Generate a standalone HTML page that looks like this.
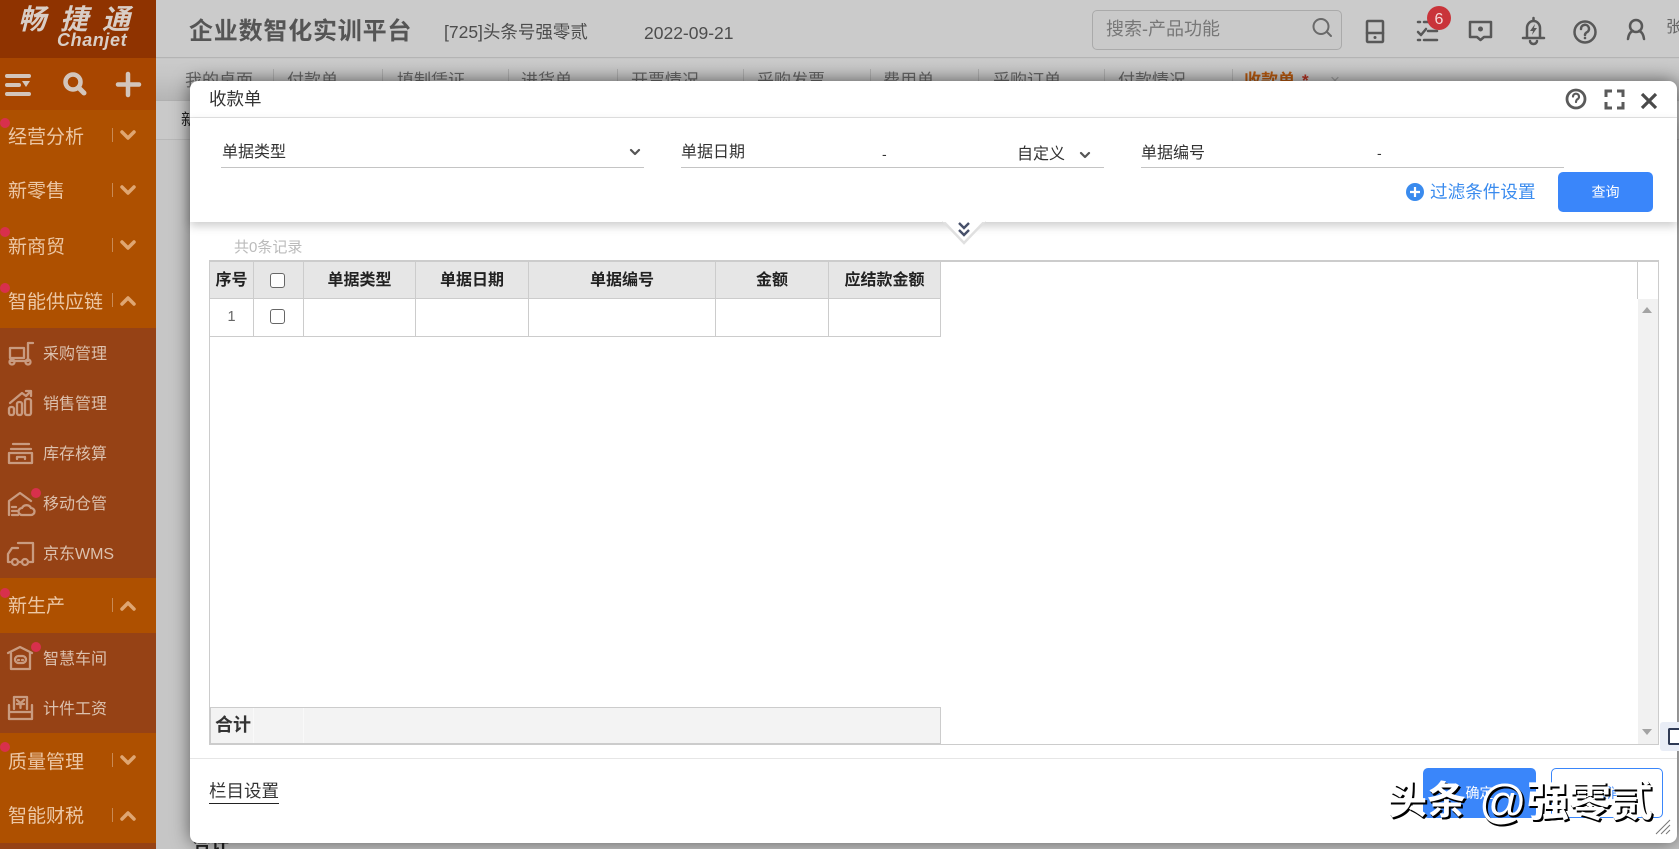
<!DOCTYPE html>
<html lang="zh"><head><meta charset="utf-8"><title>收款单</title>
<style>
*{box-sizing:border-box;margin:0;padding:0}
html,body{width:1679px;height:849px;overflow:hidden;background:#c6c6c6;font-family:"Liberation Sans","Noto Sans CJK SC",sans-serif}
#p{position:relative;width:1679px;height:849px;overflow:hidden}
.a{position:absolute;white-space:nowrap}
.m{position:absolute;left:0;width:156px;height:55px;background:#ae5000;color:#ecc7a5;font-size:19px;line-height:55px;padding-left:8px}
.s{position:absolute;left:0;width:156px;height:50px;background:#964215;color:#dcc1ae;font-size:16px;line-height:54px;padding-left:43px}
.dv{position:absolute;left:112px;width:1px;height:14px;background:#c98a55}
.d{position:absolute;width:10px;height:10px;border-radius:50%;background:#d8304c}
.t{position:absolute;top:71px;font-size:17px;line-height:20px;color:#666;white-space:nowrap}
.ts{position:absolute;top:69px;width:1px;height:12px;background:#adadad}
.f{position:absolute;font-size:16px;line-height:22px;color:#333;white-space:nowrap}
.u{position:absolute;height:1px;background:#c4c4c4}
.h{position:absolute;top:262px;height:36px;line-height:37px;background:#e6e6e6;font-size:16px;font-weight:bold;color:#222;text-align:center;border-right:1px solid #ccc}
.c{position:absolute;top:298px;height:39px;border-right:1px solid #ccc;border-bottom:1px solid #ccc;border-top:1px solid #ccc}
.cb{position:absolute;left:270px;width:15px;height:15px;border:1.5px solid #666;border-radius:3px;background:#fff}
.wm{position:absolute;color:#fff;font-weight:bold;text-shadow:2px 2px 0 #000,1px 2px 0 #000;white-space:nowrap;line-height:50px;top:777px}
</style></head><body><div id="p">

<!-- page background -->
<div class="a" style="left:156px;top:0;width:1523px;height:58px;background:#cbcbcb;border-bottom:1px solid #b4b4b4"></div>
<div class="a" style="left:156px;top:59px;width:1523px;height:41px;background:linear-gradient(#cbcbcb,#c6c6c6 40%,#b5b5b5)"></div>
<div class="a" style="left:156px;top:100px;width:1523px;height:40px;background:#c9c9c9;border-top:1px solid #b0b0b0;border-bottom:1px solid #b8b8b8"></div>
<div class="a" style="left:181px;top:110px;font-size:16px;line-height:22px;color:#222">新</div>

<div class="a" style="left:189px;top:20px;font-size:24px;letter-spacing:.8px;line-height:24px;font-weight:bold;color:#555">企业数智化实训平台</div>
<div class="a" style="left:444px;top:20px;font-size:17.5px;line-height:24px;color:#4d4d4d">[725]头条号强零贰</div>
<div class="a" style="left:644px;top:21px;font-size:17.5px;line-height:24px;color:#4d4d4d">2022-09-21</div>

<div class="a" style="left:1092px;top:10px;width:250px;height:40px;border:1px solid #aaa;border-radius:5px;background:#c9c9c9"></div>
<div class="a" style="left:1106px;top:17px;font-size:18px;line-height:24px;color:#777">搜索-产品功能</div>
<div class="a" style="left:1666px;top:17px;font-size:16px;line-height:22px;color:#666">张</div>

<span class="t" style="left:185px">我的桌面</span><i class="ts" style="left:273px"></i>
<span class="t" style="left:287px">付款单</span><i class="ts" style="left:382px"></i>
<span class="t" style="left:397px">填制凭证</span><i class="ts" style="left:508px"></i>
<span class="t" style="left:521px">进货单</span><i class="ts" style="left:617px"></i>
<span class="t" style="left:631px">开票情况</span><i class="ts" style="left:743px"></i>
<span class="t" style="left:757px">采购发票</span><i class="ts" style="left:870px"></i>
<span class="t" style="left:883px">费用单</span><i class="ts" style="left:978px"></i>
<span class="t" style="left:993px">采购订单</span><i class="ts" style="left:1104px"></i>
<span class="t" style="left:1118px">付款情况</span><i class="ts" style="left:1232px"></i>
<span class="t" style="left:1244px;color:#b4580f;font-weight:bold">收款单</span>
<span class="t" style="left:1302px;color:#b03020;font-weight:bold">*</span>
<span class="t" style="left:1330px;color:#999">×</span>

<div class="a" style="left:193px;top:833px;font-size:18px;line-height:24px;font-weight:bold;color:#222">合计</div>

<!-- sidebar -->
<div class="a" style="left:0;top:0;width:156px;height:849px;background:#964215"></div>
<div class="a" style="left:0;top:0;width:156px;height:58px;background:#8f3300"></div>
<div class="a" style="left:0;top:58px;width:156px;height:52px;background:#a84600"></div>
<div class="a" style="left:18px;top:5px;font-size:28px;line-height:30px;font-weight:bold;font-style:italic;letter-spacing:14px;color:#d9cec6">畅捷通</div>
<div class="a" style="left:57px;top:31px;font-size:18px;line-height:18px;font-style:italic;font-weight:bold;letter-spacing:.6px;color:#d9cec6">Chanjet</div>

<div class="m" style="top:110px">经营分析</div>
<div class="m" style="top:165px;line-height:53px">新零售</div>
<div class="m" style="top:220px">新商贸</div>
<div class="m" style="top:273px;line-height:59px">智能供应链</div>
<div class="s" style="top:328px">采购管理</div>
<div class="s" style="top:378px">销售管理</div>
<div class="s" style="top:428px">库存核算</div>
<div class="s" style="top:478px">移动仓管</div>
<div class="s" style="top:528px">京东WMS</div>
<div class="m" style="top:578px;line-height:57px">新生产</div>
<div class="s" style="top:633px">智慧车间</div>
<div class="s" style="top:683px">计件工资</div>
<div class="m" style="top:733px;line-height:59px">质量管理</div>
<div class="m" style="top:788px;line-height:57px">智能财税</div>
<i class="dv" style="top:128px"></i><i class="dv" style="top:183px"></i><i class="dv" style="top:238px"></i><i class="dv" style="top:293px"></i><i class="dv" style="top:598px"></i><i class="dv" style="top:753px"></i><i class="dv" style="top:808px"></i>
<i class="d" style="left:0;top:118px"></i><i class="d" style="left:0;top:227px"></i><i class="d" style="left:0;top:283px"></i><i class="d" style="left:0;top:588px"></i><i class="d" style="left:0;top:742px"></i><i class="d" style="left:31px;top:488px"></i><i class="d" style="left:31px;top:642px"></i>

<!-- modal -->
<div class="a" style="left:190px;top:81px;width:1487px;height:762px;background:#fff;border-radius:8px;box-shadow:0 0 18px rgba(0,0,0,.55)"></div>
<div class="a" style="left:190px;top:117px;width:1487px;height:1px;background:#e4e4e4"></div>
<div class="a" style="left:190px;top:118px;width:1487px;height:104px;background:#fff;box-shadow:0 4px 9px rgba(0,0,0,.2)"></div>
<div class="a" style="left:209px;top:87px;font-size:17.5px;line-height:24px;color:#333">收款单</div>

<span class="f" style="left:222px;top:142px">单据类型</span><div class="u" style="left:221px;top:167px;width:423px"></div>
<span class="f" style="left:681px;top:142px">单据日期</span><span class="f" style="left:882px;top:143px;font-size:14px">-</span><span class="f" style="left:1017px;top:144px">自定义</span><div class="u" style="left:681px;top:167px;width:423px"></div>
<span class="f" style="left:1141px;top:143px">单据编号</span><span class="f" style="left:1377px;top:142px;font-size:14px">-</span><div class="u" style="left:1141px;top:167px;width:423px"></div>

<div class="a" style="left:1430px;top:180px;font-size:17.6px;line-height:24px;color:#3a8bee">过滤条件设置</div>
<div class="a" style="left:1558px;top:172px;width:95px;height:40px;background:#3a86fa;border-radius:5px;color:#fff;font-size:14px;line-height:40px;text-align:center">查询</div>
<div class="a" style="left:234px;top:237px;font-size:15px;line-height:22px;color:#bbb">共0条记录</div>

<!-- table -->
<div class="a" style="left:209px;top:260px;width:1450px;height:485px;border:1px solid #ccc;border-top-width:2px"></div>
<div class="a" style="left:1637px;top:262px;width:1px;height:37px;background:#ccc"></div>
<div class="a" style="left:1638px;top:299px;width:20px;height:445px;background:#f1f1f1"></div>

<div class="h" style="left:210px;width:44px">序号</div>
<div class="h" style="left:254px;width:50px"></div>
<div class="h" style="left:304px;width:112px">单据类型</div>
<div class="h" style="left:416px;width:113px">单据日期</div>
<div class="h" style="left:529px;width:187px">单据编号</div>
<div class="h" style="left:716px;width:113px">金额</div>
<div class="h" style="left:829px;width:112px">应结款金额</div>
<div class="c" style="left:210px;width:44px;text-align:center;font-size:14.5px;line-height:37px;color:#666">1</div>
<div class="c" style="left:254px;width:50px"></div>
<div class="c" style="left:304px;width:112px"></div>
<div class="c" style="left:416px;width:113px"></div>
<div class="c" style="left:529px;width:187px"></div>
<div class="c" style="left:716px;width:113px"></div>
<div class="c" style="left:829px;width:112px"></div>
<div class="cb" style="top:273px;background:#fdfdfd"></div>
<div class="cb" style="top:309px"></div>

<div class="a" style="left:210px;top:707px;width:731px;height:37px;background:#f3f3f3;border:1px solid #ccc;border-bottom-width:1.5px;font-size:18px;font-weight:bold;line-height:35px;padding-left:4px;color:#333">合计</div>
<div class="a" style="left:253px;top:708px;width:1px;height:35px;background:#f9f9f9"></div>
<div class="a" style="left:303px;top:708px;width:1px;height:35px;background:#f9f9f9"></div>

<!-- footer -->
<div class="a" style="left:190px;top:758px;width:1487px;height:1px;background:#e6e6e6"></div>
<div class="a" style="left:209px;top:779px;font-size:17.5px;line-height:24px;color:#333;border-bottom:1px solid #222;padding-bottom:0">栏目设置</div>
<div class="a" style="left:1423px;top:768px;width:113px;height:50px;background:#3a86fa;border-radius:5px;color:#fff;font-size:14px;line-height:50px;text-align:center">确定</div>
<div class="a" style="left:1551px;top:768px;width:112px;height:50px;border:1px solid #3a86fa;border-radius:5px;color:#3a86fa;font-size:14px;line-height:48px;text-align:center;background:#fff">取消</div>
<div class="a" style="left:1660px;top:722px;width:19px;height:29px;background:#e9edf6;border-radius:3px 0 0 3px"></div>
<div class="a" style="left:1668px;top:728px;width:11px;height:17px;background:#fff;border:2px solid #2f3a55;border-right:0;border-radius:2px 0 0 2px"></div>

<!-- all icons -->
<svg class="a" style="left:0;top:0" width="1679" height="849" viewBox="0 0 1679 849" fill="none">
 <!-- sidebar tools -->
 <g stroke="#d3c5bb" stroke-width="4" stroke-linecap="round">
  <path d="M7 76H29M7 85H19M7 94H29"/>
  <circle cx="73" cy="82" r="7.5" stroke-width="4.5"/>
  <path d="M79 88L84 93" stroke-width="5"/>
  <path d="M128 74V95M118 84.500H139" stroke-width="4.500"/>
 </g>
 <path d="M22 81H30L26 87Z" fill="#d3c5bb"/>
 <!-- chevrons -->
 <g stroke="#dfa672" stroke-width="3.500" stroke-linecap="round" stroke-linejoin="round">
  <path d="M122 132L128 138L134 132M122 187L128 193L134 187M122 242L128 248L134 242"/>
  <path d="M122 304L128 298L134 304M122 609L128 603L134 609M122 819L128 813L134 819M122 757L128 763L134 757"/>
 </g>
 <!-- sub-menu icons -->
 <g stroke="#c99b80" stroke-width="2.300" stroke-linecap="round" stroke-linejoin="round">
  <path d="M33 343H28V361H10M10 348H24V358H10Z"/><circle cx="12" cy="362" r="2.500"/><circle cx="28" cy="362" r="2.500"/>
  <path d="M10 403L22 393L26 396L30 392M26 391H31V396"/><rect x="9" y="407" width="5" height="8" rx="2"/><rect x="17" y="402" width="5" height="13" rx="2"/><rect x="25" y="399" width="6" height="16" rx="2"/>
  <path d="M13 444H29M11 449H31"/><path d="M9 453H32V463H9ZM17 459V457H25V459"/>
  <path d="M9 515V501L20 493L31 501"/><path d="M22 515H31A3 3 0 0 0 31 508A5 5 0 0 0 22 508A3.500 3.500 0 0 0 22 515Z"/><path d="M12 507H16M12 511H18M12 515H18"/>
  <path d="M18 543H33V562H29M21 562H18M18 548H12L8 554V562H10"/><circle cx="15" cy="562" r="3"/><circle cx="25" cy="562" r="3"/>
  <path d="M8 653L20 647L32 653"/><path d="M11 653V669H30V653"/><rect x="15" y="656" width="11" height="7" rx="3.500"/><path d="M18 660H19M22 660H23"/>
  <path d="M14 709V697H27V709"/><path d="M17 700L20.500 703L24 700M20.500 703V708M17 704H24"/><path d="M9 705V719H32V705M9 712H32"/>
 </g>
 <!-- header icons -->
 <g stroke="#585858" stroke-width="2.500" stroke-linecap="round" stroke-linejoin="round">
  <circle cx="1321" cy="26.500" r="7.500" stroke="#6a6a6a" stroke-width="2"/><path d="M1327 32L1331 36" stroke="#6a6a6a" stroke-width="2"/>
  <rect x="1367" y="21" width="16" height="21" rx="1"/><path d="M1367 33H1383"/>
  <path d="M1418 22H1420M1418 40H1420M1424 40H1437M1418 32L1421 35L1426 29M1428 31H1437M1424 22H1432"/>
  <path d="M1470 22H1491V37H1484L1480.500 40L1477 37H1470Z"/>
  <path d="M1523 38H1544M1527 38V28A6.500 7 0 0 1 1540 28V38M1530 41A3.500 3 0 0 0 1537 41"/><path d="M1533.500 18V20"/>
  <circle cx="1585" cy="32" r="10.500"/><path d="M1581 29A4 4 0 1 1 1586.500 32.500Q1585 33.500 1585 35"/>
  <circle cx="1636" cy="26" r="6"/><path d="M1628 39Q1629 32 1633 31M1644 39Q1643 32 1639 31"/>
 </g>
 <circle cx="1375" cy="37.500" r="1.500" fill="#585858"/><circle cx="1480.500" cy="29" r="2.500" fill="#585858"/><circle cx="1585" cy="38" r="1.300" fill="#585858"/>
 <path d="M1535 24L1530 31H1533L1532 35L1537 28H1534Z" fill="#585858"/>
 <circle cx="1439" cy="18" r="12" fill="#c9343a"/>
 <text x="1439" y="24" text-anchor="middle" font-family="Liberation Sans" font-size="16" fill="#f4d9d9">6</text>
 <!-- modal icons -->
 <g stroke="#5a5a5a" stroke-width="2.800">
  <circle cx="1576" cy="99" r="9"/><path d="M1573 96.500A3 3 0 1 1 1577 99.500Q1576 100.500 1576 102" stroke-width="2.200" stroke-linecap="round"/>
  <path d="M1606 97V91H1612M1617 91H1623V97M1623 102V108H1617M1612 108H1606V102" stroke-width="3"/>
 </g>
 <path d="M1642 94L1656 108M1656 94L1642 108" stroke="#4a4a4a" stroke-width="3.200"/>
 <path d="M631 150L635 154L639 150M1081 153L1085 157L1089 153" stroke="#555" stroke-width="2.200" stroke-linecap="round" stroke-linejoin="round"/>
 <circle cx="1415" cy="192" r="9" fill="#3a8bee"/><path d="M1415 187V197M1410 192H1420" stroke="#fff" stroke-width="2.200"/>
 <!-- notch -->
 <path d="M943 221L964 243L985 221" fill="#fff" stroke="#e0e0e0" stroke-width="2.500"/>
 <path d="M943 220H985V222H943Z" fill="#fff"/>
 <path d="M959 223L964 228L969 223M959 230L964 235L969 230" stroke="#47506a" stroke-width="2.400" fill="none"/>
 <!-- scroll arrows -->
 <path d="M1642 313L1647 307L1652 313Z M1642 729L1652 729L1647 735Z" fill="#a3a3a3"/>
 <!-- resize grip -->
 <path d="M1656 834L1670 820M1661 834L1670 825M1666 834L1670 830" stroke="#777" stroke-width="1"/>
</svg>

<!-- watermark -->
<span class="wm" style="left:1388px;font-size:39px">头条</span>
<span class="wm" style="left:1479px;font-size:47px;font-weight:normal">@</span>
<span class="wm" style="left:1527px;font-size:42px">强零贰</span>
</div></body></html>
